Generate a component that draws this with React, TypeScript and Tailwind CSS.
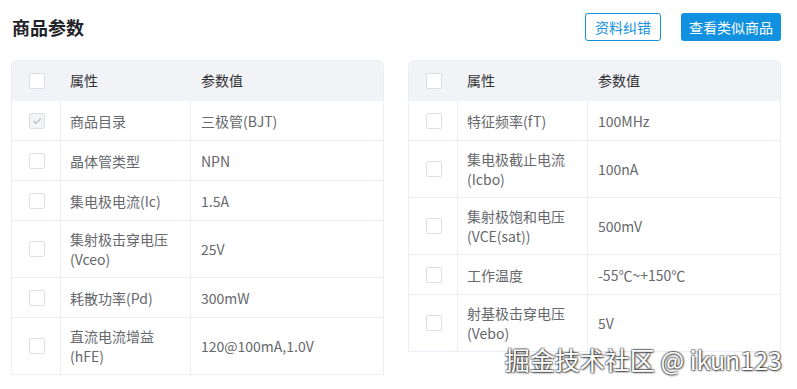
import React from "react";

type Row = { name: string; value: string; checked?: boolean };

const left: Row[] = [
  { name: "商品目录", value: "三极管(BJT)", checked: true },
  { name: "晶体管类型", value: "NPN" },
  { name: "集电极电流(Ic)", value: "1.5A" },
  { name: "集射极击穿电压(Vceo)", value: "25V" },
  { name: "耗散功率(Pd)", value: "300mW" },
  { name: "直流电流增益(hFE)", value: "120@100mA,1.0V" },
];

const right: Row[] = [
  { name: "特征频率(fT)", value: "100MHz" },
  { name: "集电极截止电流(Icbo)", value: "100nA" },
  { name: "集射极饱和电压(VCE(sat))", value: "500mV" },
  { name: "工作温度", value: "-55℃~+150℃" },
  { name: "射基极击穿电压(Vebo)", value: "5V" },
];

function Checkbox({ checked }: { checked?: boolean }) {
  if (checked) {
    return (
      <span className="w-[16px] h-[16px] rounded-[2px] border border-[#dcdfe6] bg-[#f2f3f5] flex items-center justify-center">
        <svg width="10" height="8" viewBox="0 0 10 8" fill="none">
          <path d="M1.5 4 L4 6.3 L8.7 1.5" stroke="#b8bcc4" strokeWidth="1.2" />
        </svg>
      </span>
    );
  }
  return <span className="w-[16px] h-[16px] rounded-[2px] border border-[#dcdfe6] bg-white block" />;
}

function Table({ rows }: { rows: Row[] }) {
  return (
    <div className="border border-[#ebeef5] border-b-0 rounded-t-[6px] overflow-hidden">
      <div className="flex h-[40px] bg-[#f1f3f7] text-[#303133] text-[14px] items-center border-b border-[#f1f3f7]">
        <div className="w-[49px] flex items-center justify-center pl-[1px]">
          <Checkbox />
        </div>
        <div className="w-[130px] px-[9px]">属性</div>
        <div className="flex-1 px-[10px]">参数值</div>
      </div>
      {rows.map((r, i) => (
        <div
          key={i}
          className="flex min-h-[40px] border-b border-[#ebeef5] text-[14px] leading-[20px] text-[#66686c]"
        >
          <div className="w-[49px] flex items-center justify-center pl-[1px] border-r border-[#ebeef5]">
            <Checkbox checked={r.checked} />
          </div>
          <div className="w-[130px] px-[9px] py-[8px] flex items-center border-r border-[#ebeef5]">
            <span>{r.name}</span>
          </div>
          <div className="flex-1 px-[10px] py-[8px] flex items-center">{r.value}</div>
        </div>
      ))}
    </div>
  );
}

export default function App() {
  return (
    <div
      className="relative w-[797px] h-[389px] bg-white overflow-hidden"
      style={{ fontFamily: '"Noto Sans CJK SC", "Noto Sans", sans-serif' }}
    >
      <div className="ml-[11px] w-[770px] pt-[13px]">
        <div className="flex items-center justify-between h-[28px] mb-[19px]">
          <h1 className="text-[18px] font-bold text-[#1f2329] leading-[28px] pl-[1px]">商品参数</h1>
          <div className="flex items-center gap-[20px]">
            <button className="w-[76px] h-[28px] rounded-[3px] border border-[#1492e0] text-[#1492e0] text-[14px] flex items-center justify-center bg-white">
              资料纠错
            </button>
            <button className="w-[100px] h-[28px] rounded-[3px] bg-[#1192e0] text-white text-[14px] flex items-center justify-center">
              查看类似商品
            </button>
          </div>
        </div>
        <div className="grid grid-cols-2 gap-[24px] items-start">
          <Table rows={left} />
          <Table rows={right} />
        </div>
      </div>
      <div
        className="absolute right-[15px] top-[343px] text-[25px] leading-[32px] text-white whitespace-nowrap [text-shadow:1px_1px_2px_rgba(0,0,0,0.7),-1px_-1px_1px_rgba(0,0,0,0.35),1px_-1px_1px_rgba(0,0,0,0.35),-1px_1px_1px_rgba(0,0,0,0.35)]"
      >
        掘金技术社区 @ ikun123
      </div>
    </div>
  );
}
